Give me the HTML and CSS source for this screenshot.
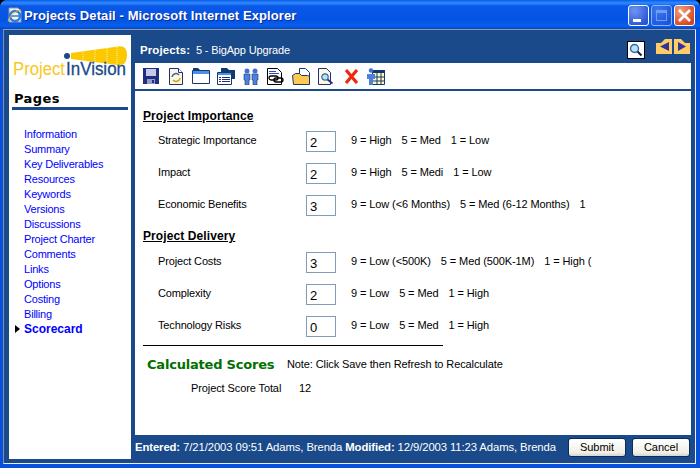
FILE: index.html
```html
<!DOCTYPE html>
<html lang="en">
<head>
  <meta charset="UTF-8">
  <title>Projects Detail - Microsoft Internet Explorer</title>
  <link rel="stylesheet" href="styles.css">
</head>
<body>
  <div class="window">
    <div class="titlebar">
      <svg class="ie-icon" width="18" height="18" viewBox="0 0 18 18">
        <path d="M3 2h9l3 3v11H3z" fill="#f4f4f0" stroke="#8a93a8"/>
        <circle cx="9" cy="10" r="5" fill="none" stroke="#2f7bd8" stroke-width="2.4"/>
        <path d="M5 10h8" stroke="#2f7bd8" stroke-width="1.6"/>
        <path d="M2 15C4 9 10 4 15 4" fill="none" stroke="#e8b430" stroke-width="1"/>
      </svg>
      <span class="title-text">Projects Detail - Microsoft Internet Explorer</span>
      <div class="win-buttons">
        <div class="win-btn"><span class="min-glyph"></span></div>
        <div class="win-btn win-btn-off"><span class="max-glyph"></span></div>
        <div class="win-btn win-btn-close">
          <svg width="21" height="21" viewBox="0 0 21 21"><path d="M5 5l11 11M16 5L5 16" stroke="#fff" stroke-width="2.6"/></svg>
        </div>
      </div>
    </div>

    <div class="frame">
      <aside class="sidebar">
        <svg class="logo" width="120" height="46" viewBox="0 0 120 46">
          <path d="M61 8L108 1.500Q117 0 117 10Q117 21 108 20L61 14z" fill="#fcc800"/>
          <path d="M73 7v8M85 5v11M97 3v15M107 2v18" stroke="#fff3b8" stroke-width="1" stroke-dasharray="1 1"/>
          <circle cx="57" cy="11" r="3" fill="#1a4a8a"/>
          <text x="3" y="30" class="logo-project" textLength="52" lengthAdjust="spacingAndGlyphs">Project</text>
          <text x="56" y="30" class="logo-vision" textLength="60" lengthAdjust="spacingAndGlyphs">InVision</text>
        </svg>
        <h2 class="pages-title">Pages</h2>
        <ul class="nav">
          <li><a href="#">Information</a></li>
          <li><a href="#">Summary</a></li>
          <li><a href="#">Key Deliverables</a></li>
          <li><a href="#">Resources</a></li>
          <li><a href="#">Keywords</a></li>
          <li><a href="#">Versions</a></li>
          <li><a href="#">Discussions</a></li>
          <li><a href="#">Project Charter</a></li>
          <li><a href="#">Comments</a></li>
          <li><a href="#">Links</a></li>
          <li><a href="#">Options</a></li>
          <li><a href="#">Costing</a></li>
          <li><a href="#">Billing</a></li>
          <li class="current"><a href="#">Scorecard</a></li>
        </ul>
      </aside>

      <div class="panel">
        <div class="panel-head">
          <span class="project-name"><b>Projects:</b>&nbsp; 5 - BigApp Upgrade</span>
          <div class="head-tools">
            <div class="search-btn">
              <svg width="14" height="14" viewBox="0 0 14 14">
                <circle cx="5.500" cy="5.500" r="4" fill="#bfe0f4" stroke="#2a6ea8" stroke-width="1.400"/>
                <path d="M8.500 8.500l4 4" stroke="#123" stroke-width="2"/>
              </svg>
            </div>
            <div class="arrows">
              <svg width="16" height="15" viewBox="0 0 16 15"><path d="M0 4h5l4-4h7v15H0z" fill="#ffcc66"/><path d="M4 7.500L13 3v9z" fill="#333399"/></svg>
              <svg width="16" height="15" viewBox="0 0 16 15"><path d="M0 0h7l4 4h5v11H0z" fill="#ffcc66"/><path d="M12 7.500L4 3v9z" fill="#333399"/></svg>
            </div>
          </div>
        </div>

        <div class="toolbar">
          <svg class="tool tool-save" width="16" height="16" viewBox="0 0 16 16">
            <path d="M0 0h16v16H0z" fill="#1f2f80"/><path d="M3 1h10v7H3z" fill="#c8c8e8"/><path d="M4 11h8v5H4z" fill="#9a9ac8"/><path d="M9 12h2v3H9z" fill="#1f2f80"/>
          </svg>
          <svg class="tool tool-refresh" width="14" height="17" viewBox="0 0 14 17">
            <path d="M.5.500h9l4 4v12H.5z" fill="#fff8d8" stroke="#1f2f80"/><path d="M9.500.500v4h4" fill="#fff" stroke="#1f2f80"/>
            <path d="M3 9a4 4 0 0 1 7-2" fill="none" stroke="#3f5fc8" stroke-width="1.600"/><path d="M11 10a4 4 0 0 1-7 2" fill="none" stroke="#c8a030" stroke-width="1.600"/>
          </svg>
          <svg class="tool tool-window" width="18" height="16" viewBox="0 0 18 16">
            <path d="M1 0h5l2 2H1z" fill="#123a70"/><path d="M.5 2.500h17v13H.5z" fill="#fff" stroke="#123a70"/><path d="M1 3h16v3H1z" fill="#4a90e8"/>
          </svg>
          <svg class="tool tool-list" width="18" height="17" viewBox="0 0 18 17">
            <path d="M4 0h6l2 2h6v9H4z" fill="#123a70"/><path d="M.5 4.500h14v12H.5z" fill="#fff" stroke="#123a70"/><path d="M1 5h13v2H1z" fill="#4a90e8"/>
            <path d="M2 9h2v1H2zM5 9h8v1H5zM2 11h2v1H2zM5 11h8v1H5zM2 13h2v1H2zM5 13h8v1H5z" fill="#1f2f80"/>
          </svg>
          <svg class="tool tool-people" width="16" height="17" viewBox="0 0 16 17">
            <circle cx="4" cy="3" r="2.500" fill="#3f6fd8"/><circle cx="12" cy="3" r="2.500" fill="#3f6fd8"/>
            <path d="M1 6h6v6H6v5H2v-5H1zM9 6h6v6h-1v5h-4v-5H9z" fill="#4f80e0" stroke="#123a70" stroke-width=".6"/>
          </svg>
          <svg class="tool tool-attach" width="17" height="17" viewBox="0 0 17 17">
            <path d="M.5.500h10l4 4v12H.5z" fill="#fff" stroke="#000"/><path d="M2 3h7v1H2zM2 5h10v1H2z" fill="#2a50c8"/>
            <rect x="2" y="8" width="9" height="4" rx="2" fill="none" stroke="#000" stroke-width="1.300"/><rect x="7" y="10" width="9" height="4" rx="2" fill="none" stroke="#000" stroke-width="1.300"/>
          </svg>
          <svg class="tool tool-open" width="18" height="17" viewBox="0 0 18 17">
            <path d="M7.500.500h6l4 4v7h-10z" fill="#fff" stroke="#123a70"/><path d="M.5 7.500l3-2h4l2 2h6l2 1v8H1.500z" fill="#ffc850" stroke="#123a70"/>
          </svg>
          <svg class="tool tool-find" width="16" height="17" viewBox="0 0 16 17">
            <path d="M.5.500h8l4 4v12H.5z" fill="#fff8e0" stroke="#1f2f80"/>
            <circle cx="7" cy="9" r="3.200" fill="#bfe0f4" stroke="#2a6ea8" stroke-width="1.200"/><path d="M9.500 11.500l5 4" stroke="#1f2f80" stroke-width="1.800"/>
          </svg>
          <svg class="tool tool-delete" width="15" height="15" viewBox="0 0 15 15">
            <path d="M2 1l11 13M13 1L2 14" stroke="#ee2a10" stroke-width="3.200"/>
          </svg>
          <svg class="tool tool-grid" width="18" height="17" viewBox="0 0 18 17">
            <path d="M5.500 2.500h12v14h-12z" fill="#fff8c0" stroke="#123a70"/><path d="M6 9h12M6 13h12M10 5v12M14 5v12" fill="none" stroke="#123a70"/>
            <path d="M5 2h13v3H5z" fill="#123a70"/>
            <circle cx="4" cy="2.500" r="2.200" fill="#3f6fd8"/><path d="M0 6h8v5H6v6H2v-6H0z" fill="#4f80e0"/>
          </svg>
        </div>

        <div class="content">
          <h3 class="section-title">Project Importance</h3>
          <div class="score-row">
            <span class="score-label">Strategic Importance</span>
            <input class="score-input" type="text" value="2">
            <span class="score-help"><span>9 = High</span><span>5 = Med</span><span>1 = Low</span></span>
          </div>
          <div class="score-row">
            <span class="score-label">Impact</span>
            <input class="score-input" type="text" value="2">
            <span class="score-help"><span>9 = High</span><span>5 = Medi</span><span>1 = Low</span></span>
          </div>
          <div class="score-row">
            <span class="score-label">Economic Benefits</span>
            <input class="score-input" type="text" value="3">
            <span class="score-help"><span>9 = Low (&lt;6 Months)</span><span>5 = Med (6-12 Months)</span><span>1</span></span>
          </div>

          <h3 class="section-title section-two">Project Delivery</h3>
          <div class="score-row">
            <span class="score-label">Project Costs</span>
            <input class="score-input" type="text" value="3">
            <span class="score-help"><span>9 = Low (&lt;500K)</span><span>5 = Med (500K-1M)</span><span>1 = High (</span></span>
          </div>
          <div class="score-row">
            <span class="score-label">Complexity</span>
            <input class="score-input" type="text" value="2">
            <span class="score-help"><span>9 = Low</span><span>5 = Med</span><span>1 = High</span></span>
          </div>
          <div class="score-row">
            <span class="score-label">Technology Risks</span>
            <input class="score-input" type="text" value="0">
            <span class="score-help"><span>9 = Low</span><span>5 = Med</span><span>1 = High</span></span>
          </div>

          <hr class="divider">

          <div class="calc-head">
            <span class="calc-title">Calculated Scores</span>
            <span class="calc-note">Note: Click Save then Refresh to Recalculate</span>
          </div>
          <div class="calc-total">
            <span class="calc-label">Project Score Total</span>
            <span>12</span>
          </div>
        </div>

        <div class="statusbar">
          <span class="audit"><b>Entered:</b> 7/21/2003 09:51 Adams, Brenda <b>Modified:</b> 12/9/2003 11:23 Adams, Brenda</span>
          <button class="xp-btn xp-submit" type="button">Submit</button>
          <button class="xp-btn" type="button">Cancel</button>
        </div>
      </div>
    </div>
  </div>
</body>
</html>
```

FILE: styles.css
```css
html, body {
  margin: 0;
  padding: 0;
  background: #000;
}

body {
  font-family: "Liberation Sans", Arial, sans-serif;
  font-size: 11px;
  letter-spacing: -0.1px;
  color: #000;
  overflow: hidden;
}

.window {
  width: 700px;
  height: 468px;
  box-sizing: border-box;
  display: flex;
  flex-direction: column;
  background: #0850dc;
  border-radius: 7px 7px 0 0;
  overflow: hidden;
  padding-bottom: 4px;
}

.titlebar {
  height: 29px;
  flex: none;
  display: flex;
  align-items: center;
  padding: 1px 5px 0 6px;
  box-sizing: border-box;
  background: linear-gradient(#0a5ae8 0, #2f8cff 3px, #0a58e8 6px, #0454e4 20px, #0760f0 26px, #0246c8 29px);
}

.ie-icon {
  flex: none;
}

.title-text {
  font-family: "Liberation Sans", sans-serif;
  font-weight: bold;
  font-size: 13px;
  letter-spacing: 0.1px;
  color: #fff;
  text-shadow: 1px 1px 0 #0a2a90;
}

.win-buttons {
  margin-left: auto;
  display: flex;
  gap: 2px;
}

.win-btn {
  width: 21px;
  height: 21px;
  box-sizing: border-box;
  border: 1px solid #fff;
  border-radius: 3px;
  background: radial-gradient(circle at 30% 25%, #6f95f0, #2a55d8 80%);
  display: flex;
  overflow: hidden;
}

.win-btn svg {
  margin: -1px;
}

.win-btn-off {
  opacity: 0.55;
}

.win-btn-close {
  background: radial-gradient(circle at 30% 25%, #f0a080, #d8441c 80%);
}

.min-glyph {
  width: 8px;
  height: 3px;
  background: #fff;
  margin: auto 0 3px 4px;
}

.max-glyph {
  width: 11px;
  height: 11px;
  margin: auto;
  box-sizing: border-box;
  border: 1px solid #c8d8f8;
  border-top-width: 3px;
}

.frame {
  flex: 1;
  min-height: 0;
  display: flex;
  margin: 0 4px 0 3px;
  padding: 5px 4px 4px 5px;
  gap: 4px;
  background: #1a4a8a;
  border-top: 1px solid #9a9a9a;
  border-left: 1px solid #7f8fa8;
  border-bottom: 1px solid #e8eef8;
  border-right: 1px solid #e8eef8;
  box-sizing: border-box;
}

/* left column */
.sidebar {
  width: 122px;
  flex: none;
  background: #fff;
  box-sizing: border-box;
}

.logo {
  display: block;
  margin: 10px 0 0 1px;
}

.logo-project {
  font-family: "Liberation Sans", sans-serif;
  font-size: 18px;
  letter-spacing: 0;
  fill: #f8c820;
}

.logo-vision {
  font-family: "Liberation Sans", sans-serif;
  font-size: 18px;
  letter-spacing: 0;
  fill: #1a4a8a;
  stroke: #1a4a8a;
  stroke-width: 0.3;
}

.pages-title {
  margin: 0 3px;
  padding: 0 0 0 2px;
  height: 16px;
  font-family: "DejaVu Sans", sans-serif;
  font-size: 13px;
  font-weight: bold;
  letter-spacing: 0.4px;
  line-height: 16px;
  border-bottom: 3px solid #1a4a8a;
}

.nav {
  list-style: none;
  margin: 17px 0 0;
  padding: 0 0 0 15px;
  letter-spacing: -0.2px;
}

.nav li {
  height: 15px;
  line-height: 15px;
  white-space: nowrap;
}

.nav a {
  color: #0000ff;
  text-decoration: none;
}

.nav .current {
  position: relative;
  font-size: 12px;
  font-weight: bold;
  letter-spacing: 0;
}

.nav .current::before {
  content: "";
  position: absolute;
  left: -9px;
  top: 3px;
  border-left: 5px solid #000;
  border-top: 4px solid transparent;
  border-bottom: 4px solid transparent;
}

/* right column */
.panel {
  flex: 1;
  min-width: 0;
  display: flex;
  flex-direction: column;
}

.panel-head {
  height: 28px;
  flex: none;
  display: flex;
  align-items: flex-start;
  justify-content: space-between;
  color: #fff;
}

.project-name {
  margin: 8px 0 0 5px;
  line-height: 14px;
  letter-spacing: -0.15px;
}

.project-name b {
  font-size: 11.500px;
  letter-spacing: 0.1px;
}

.head-tools {
  display: flex;
  gap: 11px;
  margin-right: 1px;
  margin-top: 4px;
}

.search-btn {
  width: 18px;
  height: 18px;
  margin-top: 2px;
  box-sizing: border-box;
  border: 1px solid #000;
  background: #fff;
  display: flex;
  align-items: center;
  justify-content: center;
}

.arrows {
  display: flex;
  gap: 2px;
}

.toolbar {
  height: 26px;
  flex: none;
  display: flex;
  align-items: center;
  background: #fff;
  border-bottom: 2px solid #1a4a8a;
}

.tool {
  flex: none;
  margin-left: 8px;
}

.tool-refresh, .tool-delete {
  margin-left: 10px;
}

.tool-window {
  margin-left: 9px;
}

.tool-list {
  margin-left: 7px;
}

.content {
  flex: 1;
  min-height: 0;
  background: #fff;
  padding: 18px 0 0 8px;
  overflow: hidden;
}

.section-title {
  margin: 0 0 8px;
  font-size: 12px;
  font-weight: bold;
  letter-spacing: 0.1px;
  line-height: 14px;
  text-decoration: underline;
}

.section-two {
  margin: 2px 0 9px;
}

.score-row {
  display: grid;
  grid-template-columns: 133px 30px 1fr;
  column-gap: 15px;
  height: 32px;
  padding-left: 15px;
}

.score-label {
  margin-top: 2px;
  line-height: 14px;
  letter-spacing: -0.15px;
  white-space: nowrap;
}

.score-input {
  width: 30px;
  height: 21px;
  box-sizing: border-box;
  margin: 0;
  padding: 2px 0 0 3px;
  border: 1px solid #7f9db9;
  font-family: "Liberation Sans", sans-serif;
  font-size: 13px;
  background: #fff;
  color: #000;
  outline: none;
  border-radius: 0;
}

.score-help {
  display: flex;
  gap: 10px;
  margin-top: 2px;
  line-height: 14px;
  white-space: nowrap;
}

.divider {
  width: 300px;
  height: 1px;
  margin: -3px 0 0;
  border: none;
  background: #000;
}

.calc-head {
  display: flex;
  align-items: center;
  margin: 9px 0 0 4px;
  height: 18px;
}

.calc-title {
  width: 140px;
  font-family: "DejaVu Sans", sans-serif;
  font-size: 13px;
  font-weight: bold;
  letter-spacing: -0.2px;
  color: #007000;
  white-space: nowrap;
}

.calc-note {
  line-height: 14px;
}

.calc-total {
  display: flex;
  margin: 8px 0 0 48px;
  line-height: 14px;
}

.calc-label {
  width: 108px;
}

.statusbar {
  height: 24px;
  flex: none;
  display: flex;
  align-items: center;
  color: #fff;
  white-space: nowrap;
}

.audit {
  flex: 1;
  font-size: 11.300px;
  letter-spacing: -0.1px;
}

.xp-btn {
  width: 58px;
  height: 19px;
  padding: 0;
  margin-right: 1px;
  box-sizing: border-box;
  border: 1px solid #0a2a60;
  border-radius: 3px;
  background: linear-gradient(#ffffff, #f0f0e8 80%, #d8d4c8);
  font-family: "Liberation Sans", sans-serif;
  font-size: 11px;
  color: #000;
}

.xp-submit {
  margin-right: 6px;
}
```
